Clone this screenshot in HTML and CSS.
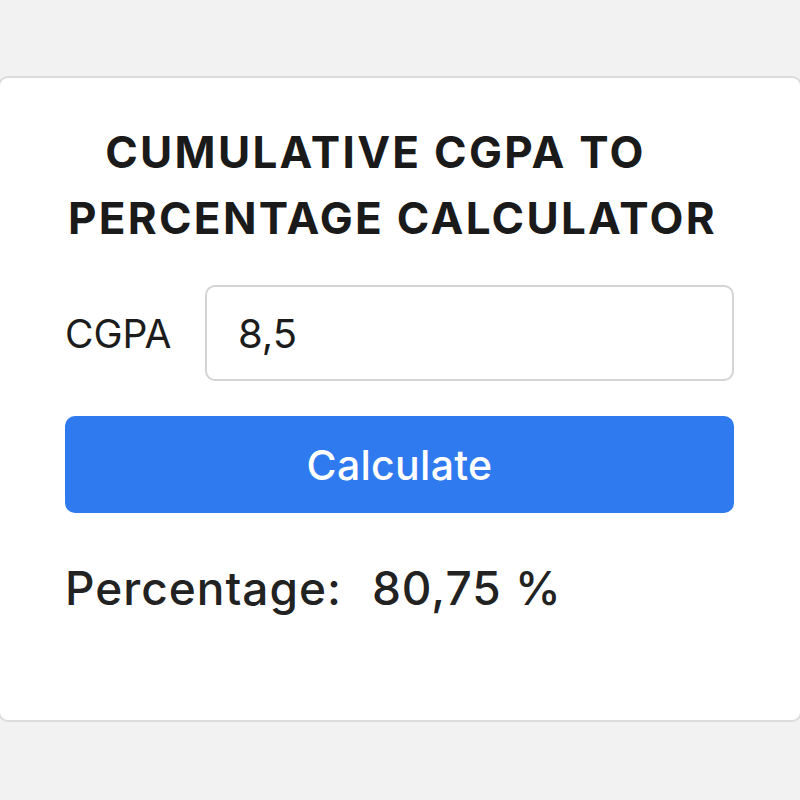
FILE: index.html
```html
<!DOCTYPE html>
<html lang="en">
  <head>
    <meta charset="UTF-8" />
    <meta name="viewport" content="width=device-width, initial-scale=1.0" />
    <title>CGPA to Percentage Calculator</title>
    <link rel="stylesheet" href="styles.css">
  </head>
  <body>
    <div class="card">
      <h1 class="title">
        <span class="line line-1">CUMULATIVE CGPA TO</span>
        <span class="line line-2">PERCENTAGE CALCULATOR</span>
      </h1>

      <div class="row">
        <label for="cgpa">CGPA</label>
        <input type="text" id="cgpa" value="8,5" />
      </div>

      <button onclick="calcular()">Calculate</button>

      <p class="resultado">Percentage:<span id="percentual">80,75 %</span></p>
    </div>

    <script>
      function calcular() {
        const valor = document.getElementById("cgpa").value.replace(",", ".");
        const cgpa = parseFloat(valor);
        if (isNaN(cgpa)) return;
        const percentual = (cgpa * 9.5).toFixed(2).replace(".", ",");
        document.getElementById("percentual").textContent = `${percentual} %`;
      }
    </script>
  </body>
</html>
```

FILE: styles.css
```css
* {
  margin: 0;
  padding: 0;
  box-sizing: border-box;
  font-family: Inter, "Liberation Sans", Arial, sans-serif;
}

body {
  background-color: #f2f2f2;
  color: #1c1c1c;
}

.card {
  background-color: #ffffff;
  border: 2px solid #dcdcdc;
  border-radius: 10px;
  margin: 76px -2px 0;
  padding: 41px 66px 105px 65px;
}

.title {
  font-size: 44px;
  font-weight: 700;
  line-height: 66px;
  letter-spacing: 2.3px;
  text-align: center;
  color: #1a1a1a;
}

.line {
  display: block;
}

.line-1 {
  padding-right: 48px;
}

.line-2 {
  padding-right: 14px;
}

.row {
  display: flex;
  align-items: center;
  margin-top: 34px;
}

.row label {
  flex: 0 0 140px;
  font-size: 39px;
  color: #1c1c1c;
}

.row input {
  flex: 1;
  width: 0;
  min-width: 0;
  height: 96px;
  border: 2px solid #d4d4d4;
  border-radius: 10px;
  padding: 0 31px;
  font-size: 40px;
  color: #1c1c1c;
  outline: none;
}

button {
  display: block;
  width: 100%;
  height: 97px;
  margin-top: 35px;
  background-color: #2f7aef;
  color: #ffffff;
  border: none;
  border-radius: 10px;
  font-size: 41px;
  font-weight: 500;
  letter-spacing: 0.3px;
  cursor: pointer;
}

.resultado {
  margin-top: 48px;
  font-size: 46px;
  font-weight: 500;
  line-height: 54px;
  letter-spacing: 1px;
  color: #222222;
}

.resultado span {
  margin-left: 30px;
}
```
